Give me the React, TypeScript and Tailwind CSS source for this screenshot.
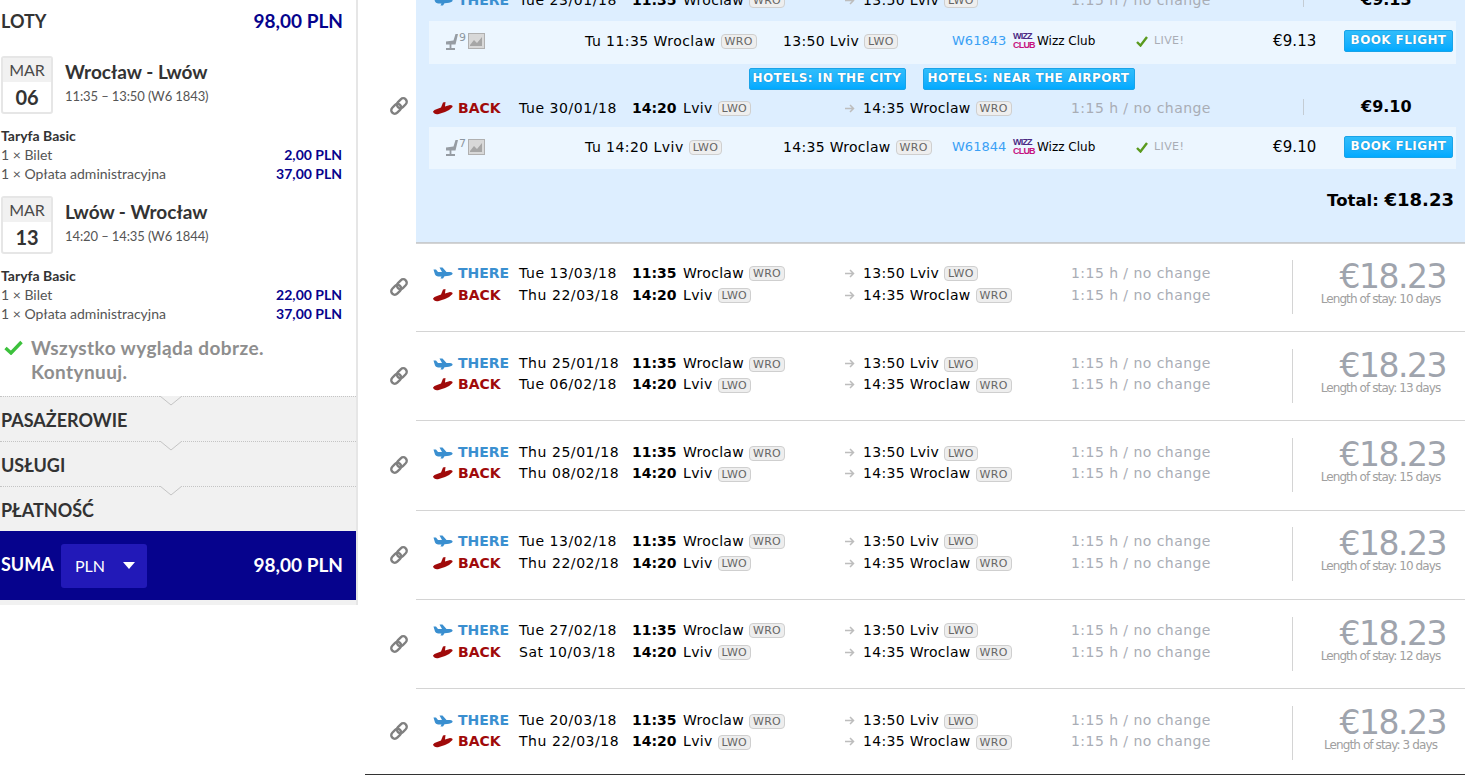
const Left = '[font-family:Lato,"Noto_Sans",sans-serif]';

function DateBox({ day }: { day: string }) {
  return (
    <div className="w-[52px] h-[58px] border-2 border-[#e6e6e6] rounded-[3px] flex flex-col items-center overflow-hidden shrink-0 bg-white">
      <div className="w-full h-[24px] bg-[#f1f1f1] text-[16px] text-[#4a4a4a] text-center leading-[24px]">MAR</div>
      <div className="text-[20px] font-bold text-[#333] leading-[30px]">{day}</div>
    </div>
  );
}

function Leg({ day, title, sub, a, b }: { day: string; title: string; sub: string; a: string; b: string }) {
  return (
    <div className="pl-px pr-[14px]">
      <div className="flex">
        <DateBox day={day} />
        <div className="ml-[12px]">
          <div className="text-[19px] font-bold text-[#333] leading-[24px] mt-[4px]">{title}</div>
          <div className="text-[13px] text-[#555] leading-[24px] tracking-[-0.1px]">{sub}</div>
        </div>
      </div>
      <div className="mt-[12px] text-[14px] font-bold text-[#333] leading-[19px]">Taryfa Basic</div>
      <div className="flex justify-between text-[14px] leading-[19px] text-[#555]">
        <span>1 × Bilet</span>
        <span className="font-bold text-[#06038d]">{a}</span>
      </div>
      <div className="flex justify-between text-[14px] leading-[19px] text-[#555]">
        <span>1 × Opłata administracyjna</span>
        <span className="font-bold text-[#06038d]">{b}</span>
      </div>
    </div>
  );
}

function Section({ label, h }: { label: string; h: string }) {
  return (
    <div className={`relative ${h} bg-[#f1f1f1] border-t border-dotted border-[#c4c4c4] pl-px`}>
      <svg className="absolute left-[160px] -top-px" width="22" height="11" viewBox="0 0 22 11">
        <path d="M0 0 L11 9 L22 0" fill="#f1f1f1" stroke="#c4c4c4" strokeWidth="1" />
      </svg>
      <div className="pt-[11px] text-[18px] font-bold text-[#333] leading-[24px]">{label}</div>
    </div>
  );
}

function LeftPanel() {
  return (
    <div className={`${Left} w-[358px] h-[605px] shrink-0 border-r-2 border-[#e6e6e6] bg-white flex flex-col`}>
      <div className="h-[56px] flex justify-between pl-px pr-[13px] pt-[9px] text-[19px] font-bold leading-[24px]">
        <span className="text-[#333] text-[18px]">LOTY</span>
        <span className="text-[#06038d]">98,00 PLN</span>
      </div>
      <Leg day="06" title="Wrocław - Lwów" sub="11:35 – 13:50 (W6 1843)" a="2,00 PLN" b="37,00 PLN" />
      <div className="h-[13px] shrink-0" />
      <Leg day="13" title="Lwów - Wrocław" sub="14:20 – 14:35 (W6 1844)" a="22,00 PLN" b="37,00 PLN" />
      <div className="h-[73px] shrink-0 flex pl-[4px] pt-[13px]">
        <svg className="mt-[4px] shrink-0" width="19" height="15" viewBox="0 0 19 15">
          <path d="M1.5 8 L7 13 L17.5 2" fill="none" stroke="#3cc13c" strokeWidth="3.4" />
        </svg>
        <div className="ml-[8px] text-[19px] font-bold text-[#8e8e8e] leading-[24px] w-[280px] tracking-[0.4px]">Wszystko wygląda dobrze. Kontynuuj.</div>
      </div>
      <Section label="PASAŻEROWIE" h="h-[45px]" />
      <Section label="USŁUGI" h="h-[45px]" />
      <Section label="PŁATNOŚĆ" h="h-[45px]" />
      <div className="h-[69px] bg-[#06038d] flex items-center pl-px pr-[13px] text-white">
        <span className="w-[60px] text-[18px] font-bold -mt-[2px]">SUMA</span>
        <div className="w-[86px] h-[44px] rounded-[3px] bg-[#2219b8] flex items-center pl-[14px] text-[16px]">
          PLN
          <svg className="ml-[18px]" width="12" height="7" viewBox="0 0 12 7"><path d="M0 0H12L6 7Z" fill="#fff" /></svg>
        </div>
        <span className="ml-auto text-[19px] font-bold">98,00 PLN</span>
      </div>
      <div className="h-[5px] bg-[#f1f1f1]" />
    </div>
  );
}

function Code({ c }: { c: string }) {
  return (
    <span className="ml-[5px] inline-block h-[15px] px-[3px] rounded-[4px] border border-[#cfcfcf] bg-[#eee] text-[11px] leading-[14px] text-[#666] align-middle tracking-[0.3px]">{c}</span>
  );
}

function PlaneThere() {
  return (
    <svg width="20" height="12" viewBox="0 0 20 12">
      <path d="M0.5 2.5 L3 2.5 L5 5 L9 5 L6.5 0.5 L9.5 0.5 L13.5 5 L17 5 Q20 5.5 19.5 7 Q18.5 8.5 14 9 L11.5 9.2 L10 11.5 L7.5 11.5 L8.5 9.4 L5 9.5 Q2.5 9 2 7.5 Z" fill="#3a8fd0" />
    </svg>
  );
}

function PlaneBack() {
  return (
    <svg width="20" height="13" viewBox="0 0 20 13">
      <path d="M0 9.5 Q1 7.5 4 7 L8 5.5 L10 0.5 L12.5 0 L12 4.5 L17 3 Q20 3 19.5 5 Q17 8 12 10 L5 12.2 Q1 12.7 0 9.5 Z" fill="#a00a0a" />
    </svg>
  );
}

function Arrow() {
  return (
    <svg width="10" height="9" viewBox="0 0 10 9">
      <path d="M0 4.5H8M5 1L8.5 4.5L5 8" fill="none" stroke="#bdbdbd" strokeWidth="1.5" />
    </svg>
  );
}

function LinkIcon() {
  return (
    <svg width="20" height="20" viewBox="0 0 20 20" className="ml-[24px]">
      <g transform="rotate(-45 10 10)" fill="none" stroke="#808080" strokeWidth="2.4">
        <rect x="0.5" y="6.5" width="11" height="7" rx="3.5" />
        <rect x="8.5" y="6.5" width="11" height="7" rx="3.5" />
      </g>
    </svg>
  );
}

function Line({ back, tight, date, time, city, code, arr, arrCity, arrCode }: { back?: boolean; tight?: boolean; date: string; time: string; city: string; code: string; arr: string; arrCity: string; arrCode: string }) {
  return (
    <div className={`flex items-center ${tight ? 'h-[21px]' : 'h-[22px]'} text-[14px] text-black whitespace-nowrap`}>
      <div className="w-[25px] flex items-center">{back ? <PlaneBack /> : <PlaneThere />}</div>
      <div className={`w-[61px] font-bold ${back ? 'text-[#a00a0a]' : 'text-[#3a8fd0]'}`}>{back ? 'BACK' : 'THERE'}</div>
      <div className="w-[113px] tracking-[0.55px]">{date}</div>
      <div className="w-[213px]"><b>{time}</b> <span className="ml-[2px] tracking-[0.3px]">{city}</span><Code c={code} /></div>
      <div className="w-[18px] flex items-center"><Arrow /></div>
      <div className="w-[208px] tracking-[0.3px]">{arr} {arrCity}<Code c={arrCode} /></div>
      <div className="text-[#a9adb5] tracking-[0.45px]">1:15 h / no change</div>
    </div>
  );
}

function Row({ date1, date2, stay, h, pad, box, tight }: { date1: string; date2: string; stay: string; h: string; pad: string; box: string; tight?: boolean }) {
  return (
    <div className={`flex items-center ${h}`}>
      <div className="w-[51px] shrink-0"><LinkIcon /></div>
      <div className={`flex-1 self-stretch border-t border-[#d4d4d4] ${pad} pl-[17px] relative`}>
        <Line tight={tight} date={date1} time="11:35" city="Wroclaw" code="WRO" arr="13:50" arrCity="Lviv" arrCode="LWO" />
        <Line tight={tight} back date={date2} time="14:20" city="Lviv" code="LWO" arr="14:35" arrCity="Wroclaw" arrCode="WRO" />
        <div className={`absolute left-[876px] right-0 ${box} h-[54px] border-l border-[#d4d4d4] text-[#9fa4ad]`}>
          <div className="text-right pr-[19px] text-[33px] leading-[33px] tracking-[-1.5px]">€18.23</div>
          <div className="w-[175px] text-center text-[12px] leading-[12px] tracking-[-0.9px] text-[#a0a0a0]">Length of stay: {stay}</div>
        </div>
      </div>
    </div>
  );
}

function WizzLogo() {
  return (
    <div className="w-[18px] h-[18px] text-[9px] leading-[9px] font-bold text-center [font-family:'Liberation_Sans',sans-serif] tracking-[-0.8px]">
      <div className="text-[#4b2a84]">WIZZ</div>
      <div className="text-[#c6117f]">CLUB</div>
    </div>
  );
}

function Seat() {
  return (
    <svg width="14" height="17" viewBox="0 0 14 17">
      <path d="M10.5 1 L13 1 L10.5 11.5 L1 11.5 L1 8.5 L8.5 7.5 Z" fill="#969ca3" />
      <path d="M5.5 11 L5.5 15.5 M1 16 H10" stroke="#969ca3" strokeWidth="1.8" fill="none" />
    </svg>
  );
}

function Detail({ n, dep, depCity, depCode, arr, arrCity, arrCode, no, price, h }: { n: string; dep: string; depCity: string; depCode: string; arr: string; arrCity: string; arrCode: string; no: string; price: string; h: string }) {
  return (
    <div className={`${h} ml-[13px] mr-[9px] bg-[#ecf6ff] flex items-center pl-[16px] text-[14px] text-black whitespace-nowrap shrink-0`}>
      <div className="w-[140px] flex items-center">
        <Seat />
        <span className="text-[11px] text-[#8c96a0] -mt-[6px]">{n}</span>
        <svg className="ml-[2px]" width="17" height="16" viewBox="0 0 17 16">
          <rect x="0.5" y="0.5" width="16" height="15" fill="#d8d8d8" stroke="#b0b0b0" />
          <path d="M2 12 L6 7 L9 10 L14 4 V13 H2Z" fill="#a6a6a6" />
        </svg>
      </div>
      <div className="w-[198px] tracking-[0.45px]">{dep} {depCity}<Code c={depCode} /></div>
      <div className="w-[169px] tracking-[0.3px]">{arr} {arrCity}<Code c={arrCode} /></div>
      <div className="w-[61px] text-[#3aa0f5] text-[13px]">{no}</div>
      <div className="w-[123px] flex items-center text-[12px]"><WizzLogo /><span className="ml-[6px]">Wizz Club</span></div>
      <div className="w-[137px] flex items-center text-[11px] text-[#a9adb5] tracking-[0.4px]">
        <svg width="12" height="11" viewBox="0 0 12 11"><path d="M1 6 L4.5 9.5 L11 1" fill="none" stroke="#5a9a1e" strokeWidth="2.4" /></svg>
        <span className="ml-[6px]">LIVE!</span>
      </div>
      <div className="w-[71px] text-[15px] tracking-[0.1px]">{price}</div>
      <Blue w="w-[109px]">BOOK FLIGHT</Blue>
    </div>
  );
}

function Blue({ w, children }: { w: string; children: string }) {
  return (
    <div className={`${w} h-[22px] rounded-[2px] border border-[#1aa3e8] bg-gradient-to-b from-[#2fbdfb] to-[#00aaff] text-white text-[12px] font-bold text-center leading-[18px] tracking-[0.4px] shrink-0 [text-shadow:0_0_1px_#0a6fa8]`}>{children}</div>
  );
}

function Expanded() {
  return (
    <div className="flex h-[243px] shrink-0">
      <div className="w-[51px] shrink-0 flex items-center"><div className="mb-[32px]"><LinkIcon /></div></div>
      <div className="flex-1 bg-[#ddeeff] border-b border-[#c8ccd0] overflow-hidden flex flex-col">
        <div className="pl-[17px] relative h-[22px] -mt-[11px] shrink-0">
          <Line date="Tue 23/01/18" time="11:35" city="Wroclaw" code="WRO" arr="13:50" arrCity="Lviv" arrCode="LWO" />
          <div className="absolute left-[887px] top-[2px] h-[16px] border-l border-[#c4ccd4]" />
          <div className="absolute left-[945px] top-0 text-[16px] font-bold leading-[22px]">€9.13</div>
        </div>
        <div className="h-[10px] shrink-0" />
        <Detail h="h-[43px] pb-[3px]" n="9" dep="Tu 11:35" depCity="Wroclaw" depCode="WRO" arr="13:50" arrCity="Lviv" arrCode="LWO" no="W61843" price="€9.13" />
        <div className="h-[25px] pt-[4px] pl-[2px] flex justify-center gap-[17px] shrink-0">
          <Blue w="w-[157px]">HOTELS: IN THE CITY</Blue>
          <Blue w="w-[212px]">HOTELS: NEAR THE AIRPORT</Blue>
        </div>
        <div className="h-[8px] shrink-0" />
        <div className="pl-[17px] relative h-[22px] shrink-0">
          <Line back date="Tue 30/01/18" time="14:20" city="Lviv" code="LWO" arr="14:35" arrCity="Wroclaw" arrCode="WRO" />
          <div className="absolute left-[887px] top-[2px] h-[16px] border-l border-[#c4ccd4]" />
          <div className="absolute left-[945px] top-0 text-[16px] font-bold leading-[20px]">€9.10</div>
        </div>
        <div className="h-[8px] shrink-0" />
        <Detail h="h-[42px] pb-[2px]" n="7" dep="Tu 14:20" depCity="Lviv" depCode="LWO" arr="14:35" arrCity="Wroclaw" arrCode="WRO" no="W61844" price="€9.10" />
        <div className="pt-[21px] pr-[11px] text-right text-[16.5px] font-bold text-black leading-[20px]">Total: <span className="text-[18px]">€18.23</span></div>
      </div>
    </div>
  );
}

export default function App() {
  return (
    <div className="flex h-[775px] w-full overflow-hidden bg-white">
      <LeftPanel />
      <div className="ml-[7px] flex-1 h-[775px] border-b border-[#333] flex flex-col [font-family:'DejaVu_Sans',Verdana,sans-serif]">
        <Expanded />
        <Row h="h-[88px]" pad="pt-[18px]" box="top-[16px]" date1="Tue 13/03/18" date2="Thu 22/03/18" stay="10 days" />
        <Row h="h-[89px]" pad="pt-[21px]" box="top-[17px]" tight date1="Thu 25/01/18" date2="Tue 06/02/18" stay="13 days" />
        <Row h="h-[90px]" pad="pt-[21px]" box="top-[17px]" tight date1="Thu 25/01/18" date2="Thu 08/02/18" stay="15 days" />
        <Row h="h-[89px]" pad="pt-[19px]" box="top-[16px]" date1="Tue 13/02/18" date2="Thu 22/02/18" stay="10 days" />
        <Row h="h-[89px]" pad="pt-[19px]" box="top-[17px]" date1="Tue 27/02/18" date2="Sat 10/03/18" stay="12 days" />
        <Row h="h-[86px]" pad="pt-[21px]" box="top-[17px]" tight date1="Tue 20/03/18" date2="Thu 22/03/18" stay="3 days" />
      </div>
    </div>
  );
}
